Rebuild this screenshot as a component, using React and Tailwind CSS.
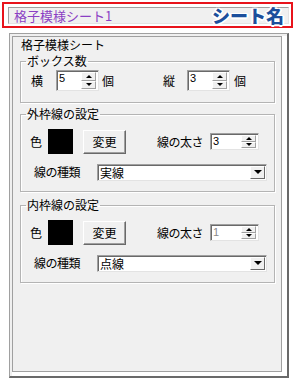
import React from "react";

const jp = "font-['Noto_Sans_CJK_JP',sans-serif]";

const Arrow = ({ up }) =>
    up ? (
        <div className="w-0 h-0 border-x-[3px] border-x-transparent border-b-[3px] border-b-black" />
    ) : (
        <div className="w-0 h-0 border-x-[3px] border-x-transparent border-t-[3px] border-t-black" />
    );

const SpinBtn = ({ up }) => (
    <div className="flex-1 flex items-center justify-center bg-[#f0f0f0] border border-t-white border-l-white border-r-[#a0a0a0] border-b-[#a0a0a0]">
        <Arrow up={up} />
    </div>
);

const Spinner = ({ value, size, dim }) => (
    <div
        className={`flex bg-white border border-t-[#a0a0a0] border-l-[#a0a0a0] border-r-[#e3e3e3] border-b-[#e3e3e3] shadow-[inset_1px_1px_0_#696969] ${
            size === "lg" ? "w-[43px] h-[21px]" : "w-[49px] h-[17px]"
        }`}
    >
        <span
            className={`flex-1 pl-[2px] pt-[1px] font-['Liberation_Sans',sans-serif] text-[11px] leading-[13px] ${
                dim ? "text-[#8a8a8a]" : "text-black"
            }`}
        >
            {value}
        </span>
        <div className="flex flex-col w-[15px] my-[1px] mr-[2px]">
            <SpinBtn up />
            <SpinBtn />
        </div>
    </div>
);

const Combo = ({ value }) => (
    <div className="flex w-[170px] h-[17px] bg-white border border-t-[#a0a0a0] border-l-[#a0a0a0] border-r-[#e3e3e3] border-b-[#e3e3e3] shadow-[inset_1px_1px_0_#696969]">
        <span className="flex-1 pl-[2px] text-[12px] leading-[15px]">{value}</span>
        <div className="w-[15px] my-[1px] mr-[1px] flex items-center justify-center bg-[#f0f0f0] border border-t-white border-l-white border-r-[#696969] border-b-[#696969]">
            <div className="w-0 h-0 border-x-[4px] border-x-transparent border-t-[4px] border-t-black" />
        </div>
    </div>
);

const Group = ({ label, className, children }) => (
    <fieldset
        className={`ml-[7px] w-[255px] border border-[#b4b4b4] shadow-[inset_1px_1px_0_#fff,1px_1px_0_#fff] ${className}`}
    >
        <legend className="ml-[5px] px-[1px] text-[12px] leading-[14px]">{label}</legend>
        {children}
    </fieldset>
);

const LineSettings = ({ label, width, type, dim, className }) => (
    <Group label={label} className={className}>
        <div className="flex items-center h-[25px] mt-[8px]">
            <span className="ml-[9px] text-[12px]">色</span>
            <div className="ml-[6px] w-[25px] h-[25px] bg-black" />
            <div className="ml-[10px] w-[43px] h-[24px] flex items-center justify-center bg-[#f0f0f0] border border-t-white border-l-white border-r-[#696969] border-b-[#696969] shadow-[inset_-1px_-1px_0_#a0a0a0] text-[12px]">
                変更
            </div>
            <span className="ml-[31px] text-[12px] tracking-[-0.5px]">線の太さ</span>
            <div className="ml-[7px]">
                <Spinner value={width} dim={dim} />
            </div>
        </div>
        <div className="flex items-center mt-[9px] mb-[10px]">
            <span className="ml-[13px] text-[12px] tracking-[-0.5px]">線の種類</span>
            <div className="ml-[17px]">
                <Combo value={type} />
            </div>
        </div>
    </Group>
);

export default function App() {
    return (
        <div className={`w-[295px] h-[378px] bg-white relative overflow-hidden ${jp} text-black`}>
            {/* header */}
            <div className="ml-[2px] mt-[2px] w-[291px] h-[26px] border-2 border-[#e8131b] pl-[4px] pt-[3px]">
                <div className="w-[281px] h-[17px] bg-[#f0f0f0] border border-t-[#a0a0a0] border-l-[#a0a0a0] border-r-[#e3e3e3] border-b-[#e3e3e3] pl-[5px] text-[13px] leading-[15px] text-[#8b3fc4]">
                    格子模様シート1
                </div>
            </div>
            <div className="absolute left-[212px] top-[5px] text-[18px] leading-[20px] font-black text-[#1c4f9c] [text-shadow:1px_1px_0_#fff,-1px_-1px_0_#fff,1px_-1px_0_#fff,-1px_1px_0_#fff,2px_0_0_#fff,-2px_0_0_#fff,0_2px_0_#fff]">
                シート名
            </div>

            {/* panel */}
            <div className="ml-[9px] mt-[5px] w-[280px] h-[345px] bg-[#f0f0f0] border-l border-t border-[#a0a0a0] border-r-2 border-b-2 border-r-[#696969] border-b-[#696969] pl-[2px] pt-[2px]">
                <div className="h-full border-r-[5px] border-b-[4px] border-white">
                    <div className="h-full border border-[#a0a0a0] bg-[#f0f0f0]">
                        <div className="ml-[8px] mt-[1px] text-[12px] leading-[14px]">格子模様シート</div>

                        <Group label="ボックス数" className="mt-[2px]">
                            <div className="flex items-center h-[21px] mt-[2px] mb-[11px] text-[12px]">
                                <span className="ml-[10px]">横</span>
                                <div className="ml-[13px]">
                                    <Spinner value="5" size="lg" />
                                </div>
                                <span className="ml-[3px]">個</span>
                                <span className="ml-[49px]">縦</span>
                                <div className="ml-[12px]">
                                    <Spinner value="3" size="lg" />
                                </div>
                                <span className="ml-[4px]">個</span>
                            </div>
                        </Group>

                        <LineSettings label="外枠線の設定" width="3" type="実線" className="mt-[4px]" />
                        <LineSettings label="内枠線の設定" width="1" type="点線" dim className="mt-[6px]" />
                    </div>
                </div>
            </div>
        </div>
    );
}
